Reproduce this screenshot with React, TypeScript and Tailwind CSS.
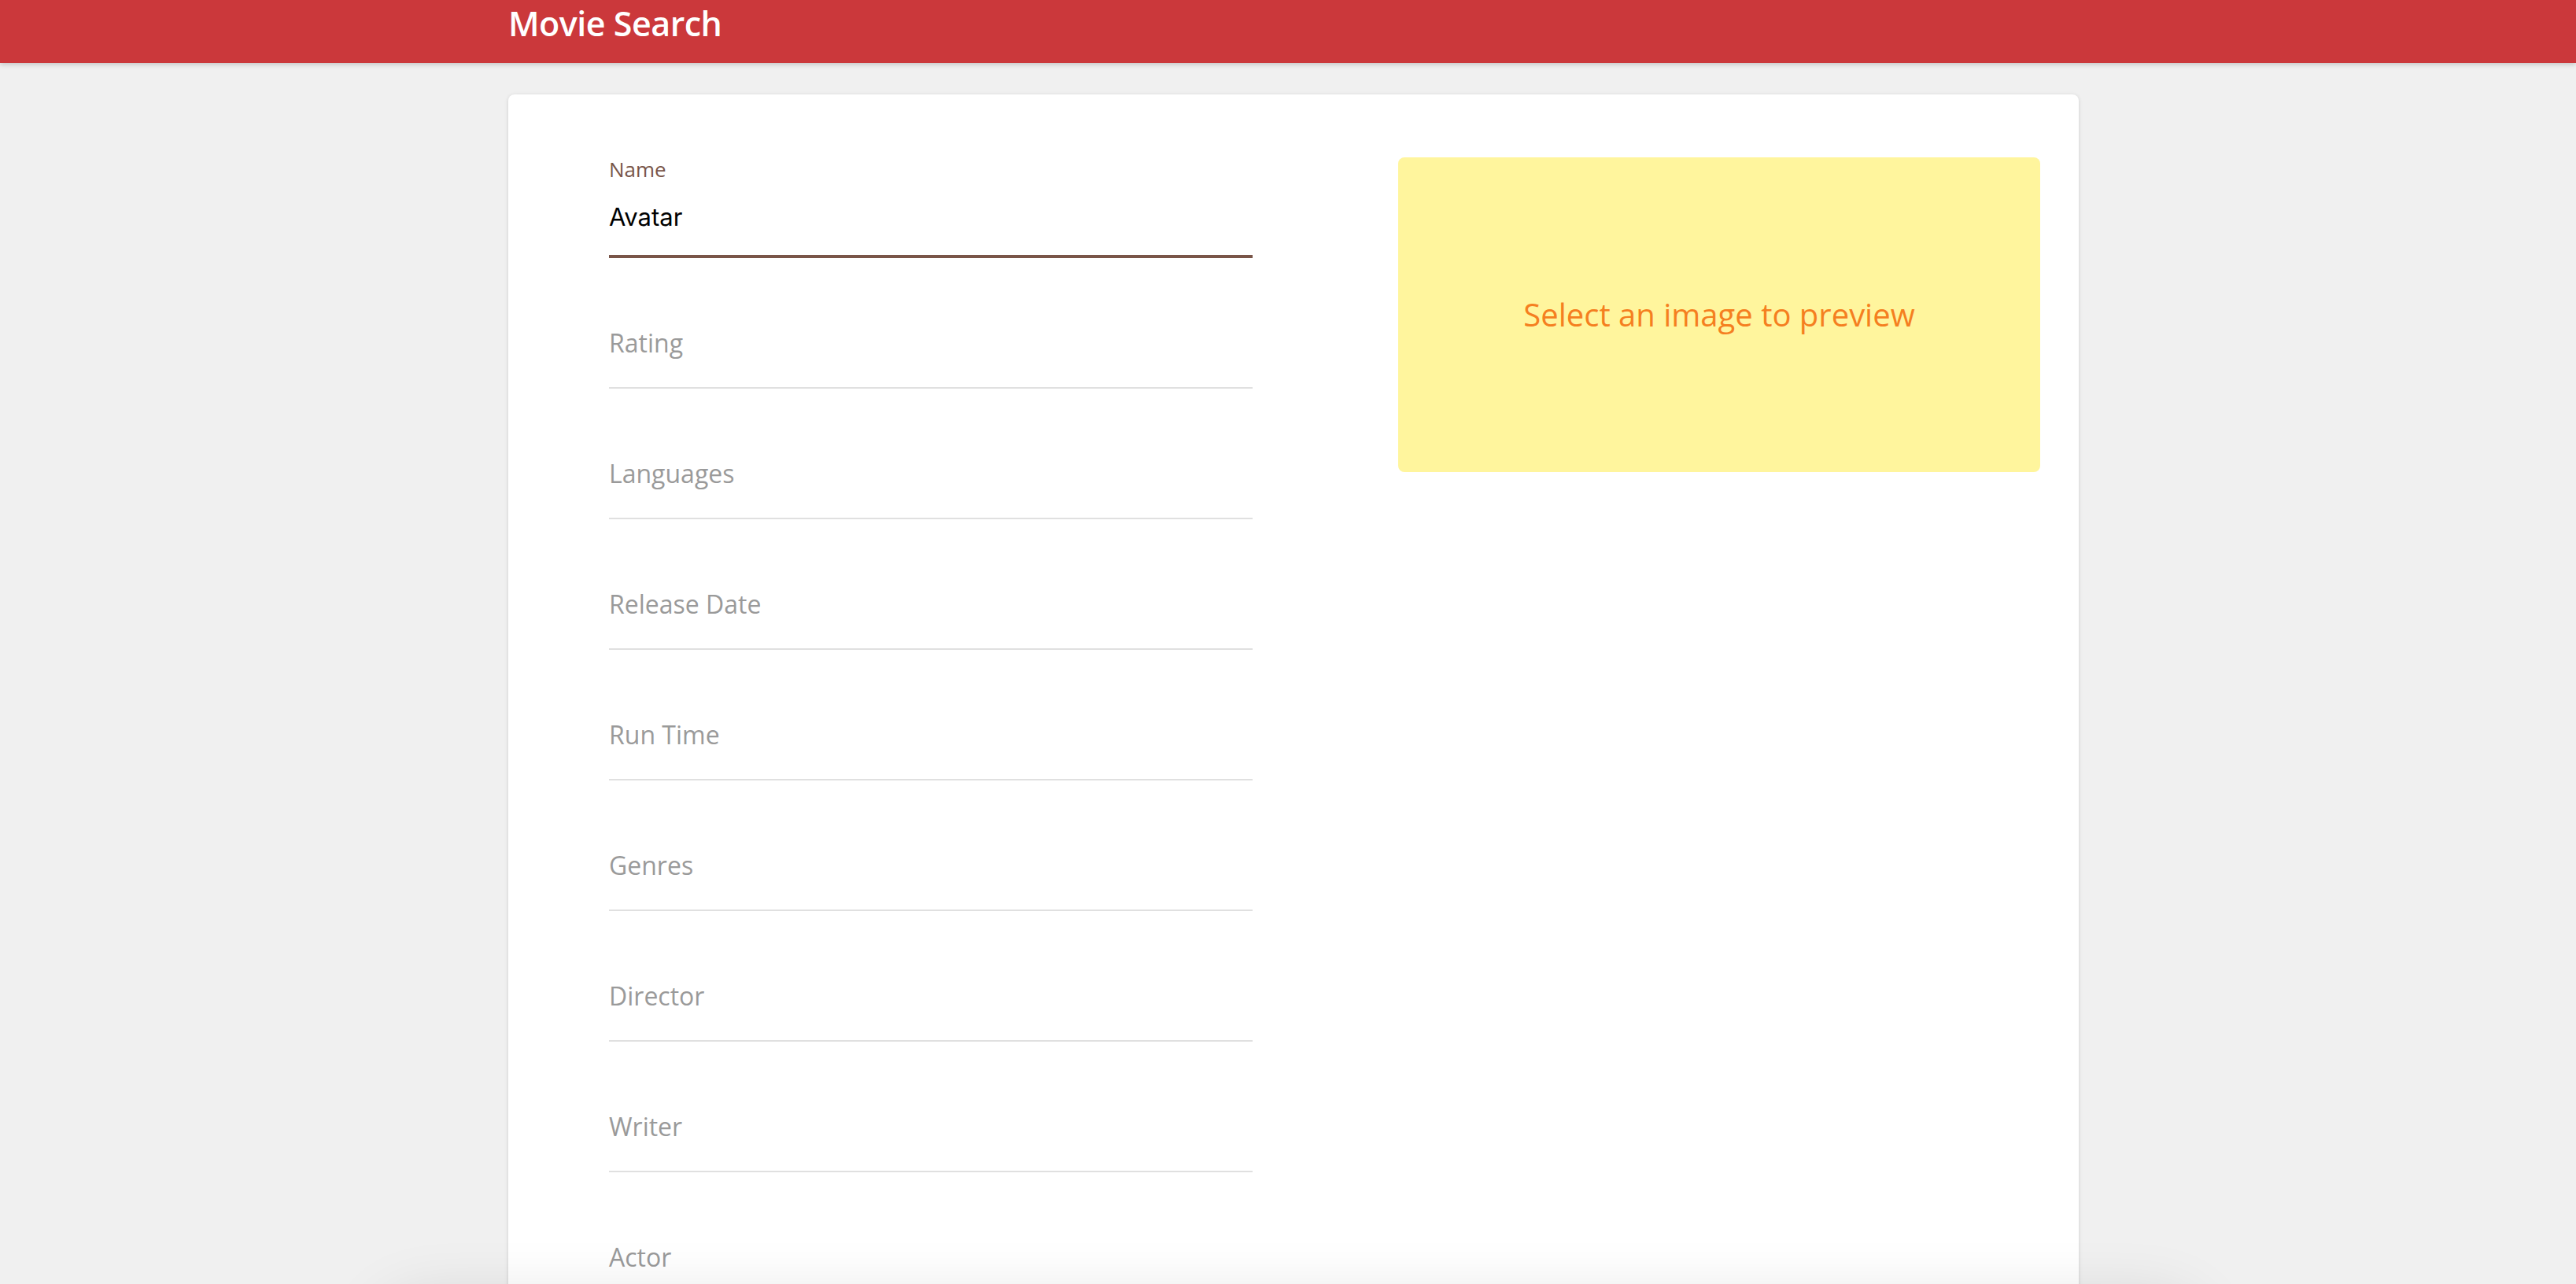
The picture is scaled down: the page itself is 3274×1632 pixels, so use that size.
import React from "react";

const fields = [
  "Rating",
  "Languages",
  "Release Date",
  "Run Time",
  "Genres",
  "Director",
  "Writer",
  "Actor",
];

const sans = "font-['Open_Sans',sans-serif]";

const EmptyField = ({ label }: { label: string }) => (
  <div className="h-[166px] flex flex-col justify-end">
    <div className={`${sans} text-[32px] leading-[38px] text-[#9a9a9a] mb-[37px]`}>{label}</div>
    <div className="h-[2px] bg-[#e0e0e0]" />
  </div>
);

export default function App() {
  return (
    <div className="relative h-screen overflow-hidden bg-[#f0f0f0]">
      <header className="h-[80px] bg-[#cb383b] shadow-[0_2px_6px_rgba(0,0,0,0.18)] relative z-10">
        <div className="ml-[646px] pt-[4px]">
          <h1 className={`${sans} text-[43px] leading-[52px] font-semibold text-white tracking-[-0.5px]`}>
            Movie Search
          </h1>
        </div>
      </header>

      <main className="ml-[646px] mt-[40px] w-[1996px]">
        <div className="bg-white rounded-[8px] shadow-[0_1px_5px_rgba(0,0,0,0.14)] flex items-start pl-[128px] pr-[49px] gap-[185px] pb-[80px]">
          <div className="w-[818px] pt-[42px]">
            <div className="h-[166px] flex flex-col justify-end">
              <div className={`${sans} text-[26px] leading-[28px] text-[#795548]`}>Name</div>
              <div className="mt-[28px] mb-[29px] font-['Inter',sans-serif] text-[31px] leading-[38px] text-black">
                Avatar
              </div>
              <div className="h-[4px] bg-[#795548]" />
            </div>
            {fields.map((f) => (
              <EmptyField key={f} label={f} />
            ))}
          </div>

          <div className="w-[816px] mt-[80px] h-[400px] rounded-[8px] bg-[#fff59d] flex items-center justify-center">
            <span className={`${sans} text-[40px] text-[#f57f20]`}>Select an image to preview</span>
          </div>
        </div>
      </main>

      <div className="absolute left-[480px] w-[2320px] top-[1650px] h-[200px] rounded-[60px] bg-[#f0f0f0] shadow-[0_0_80px_rgba(0,0,0,0.12)]" />
    </div>
  );
}
